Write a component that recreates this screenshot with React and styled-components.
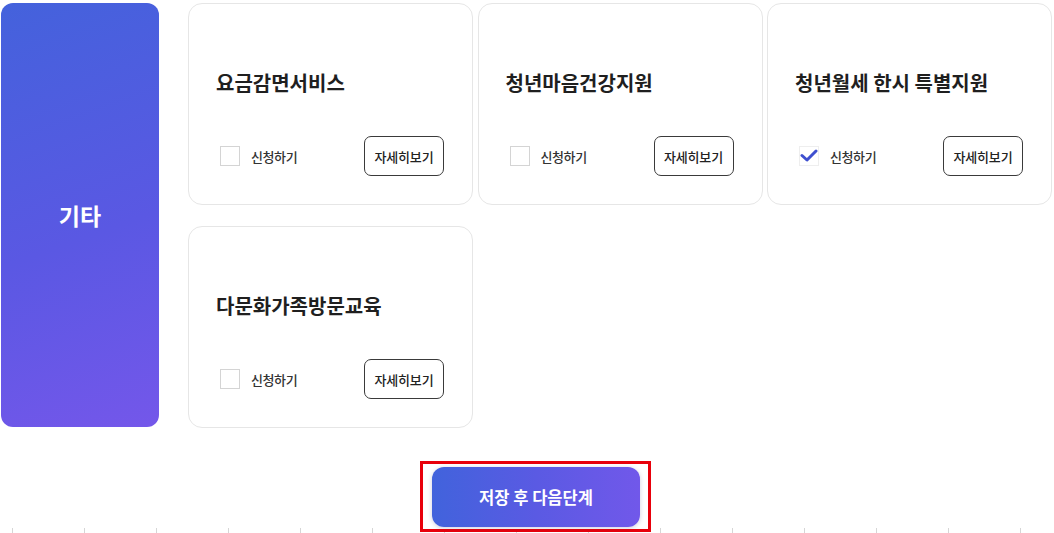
import React from 'react';
import styled, { createGlobalStyle } from 'styled-components';

const GlobalStyle = createGlobalStyle`
  body {
    margin: 0;
    background: #ffffff;
    font-family: "Noto Sans CJK KR", "Noto Sans", sans-serif;
    color: #222;
  }
`;

const Page = styled.div`
  width: 1054px;
  height: 533px;
  overflow: hidden;
  box-sizing: border-box;
  padding: 3px 2px 0 1px;
  display: flex;
  flex-direction: column;
`;

const Section = styled.div`
  display: flex;
  gap: 29px;
`;

const Category = styled.div`
  width: 158px;
  height: 424px;
  flex-shrink: 0;
  border-radius: 12px;
  background: linear-gradient(160deg, #4462dc 0%, #5a58e3 55%, #7457ea 100%);
  display: flex;
  align-items: center;
  justify-content: center;
  color: #fff;
  font-size: 23px;
  font-weight: 700;
`;

const CardGrid = styled.div`
  display: grid;
  grid-template-columns: repeat(3, 285px);
  column-gap: 4.5px;
  row-gap: 21px;
  align-content: start;
`;

const Card = styled.div`
  box-sizing: border-box;
  height: 202px;
  border: 1px solid #e6e6e6;
  border-radius: 14px;
  background: #fff;
  padding: 65px 28px 0 27px;
  display: flex;
  flex-direction: column;
`;

const Title = styled.h3`
  margin: 0;
  font-size: 20px;
  font-weight: 700;
  line-height: 28px;
  color: #1f1f1f;
`;

const CardFooter = styled.div`
  margin-top: 39px;
  display: flex;
  align-items: center;
  justify-content: space-between;
`;

const Apply = styled.label`
  display: flex;
  align-items: center;
  gap: 11px;
  padding-left: 4px;
  font-size: 13px;
  font-weight: 500;
  color: #333;
  letter-spacing: -0.4px;
`;

const Box = styled.span`
  box-sizing: border-box;
  width: 20px;
  height: 20px;
  border: 1px solid ${(p) => (p.$checked ? '#eeeeee' : '#d4d4d4')};
  display: flex;
  align-items: center;
  justify-content: center;
  background: #fff;
`;

const DetailButton = styled.button`
  box-sizing: border-box;
  width: 80px;
  height: 40px;
  border: 1px solid #3a3a3a;
  border-radius: 7px;
  background: #fff;
  font-family: inherit;
  font-size: 13px;
  font-weight: 500;
  color: #222;
  letter-spacing: -0.2px;
  padding: 0;
`;

const Footer = styled.div`
  margin-top: 33px;
  flex: 1;
  display: flex;
  justify-content: center;
  padding-left: 18px;
  background: repeating-linear-gradient(
      to right,
      transparent 0 11px,
      #d6d6d6 11px 12px,
      transparent 12px 72px
    )
    left bottom / 100% 5px no-repeat;
`;

const Highlight = styled.div`
  box-sizing: border-box;
  width: 231px;
  height: 71px;
  border: 3px solid #e8000b;
  padding: 3px 9px 0;
  background: #fff;
`;

const SubmitButton = styled.button`
  width: 208px;
  height: 60px;
  border: none;
  border-radius: 12px;
  background: linear-gradient(90deg, #4163dc 0%, #5a5ae3 50%, #7158ea 100%);
  box-shadow: 0 1px 4px rgba(60, 60, 120, 0.25);
  color: #fff;
  font-family: inherit;
  font-size: 16.5px;
  font-weight: 700;
`;

const Check = () => (
  <svg width="18" height="14" viewBox="0 0 18 14">
    <path d="M2 6.5 L7 11 L16 2" fill="none" stroke="#3e4fcf" strokeWidth="3" strokeLinecap="round" strokeLinejoin="round" />
  </svg>
);

const services = [
  { name: '요금감면서비스', checked: false },
  { name: '청년마음건강지원', checked: false },
  { name: '청년월세 한시 특별지원', checked: true },
  { name: '다문화가족방문교육', checked: false },
];

export default function App() {
  return (
    <Page>
      <GlobalStyle />
      <Section>
        <Category>기타</Category>
        <CardGrid>
          {services.map((s) => (
            <Card key={s.name}>
              <Title>{s.name}</Title>
              <CardFooter>
                <Apply>
                  <Box $checked={s.checked}>{s.checked && <Check />}</Box>
                  신청하기
                </Apply>
                <DetailButton>자세히보기</DetailButton>
              </CardFooter>
            </Card>
          ))}
        </CardGrid>
      </Section>
      <Footer>
        <Highlight>
          <SubmitButton>저장 후 다음단계</SubmitButton>
        </Highlight>
      </Footer>
    </Page>
  );
}
